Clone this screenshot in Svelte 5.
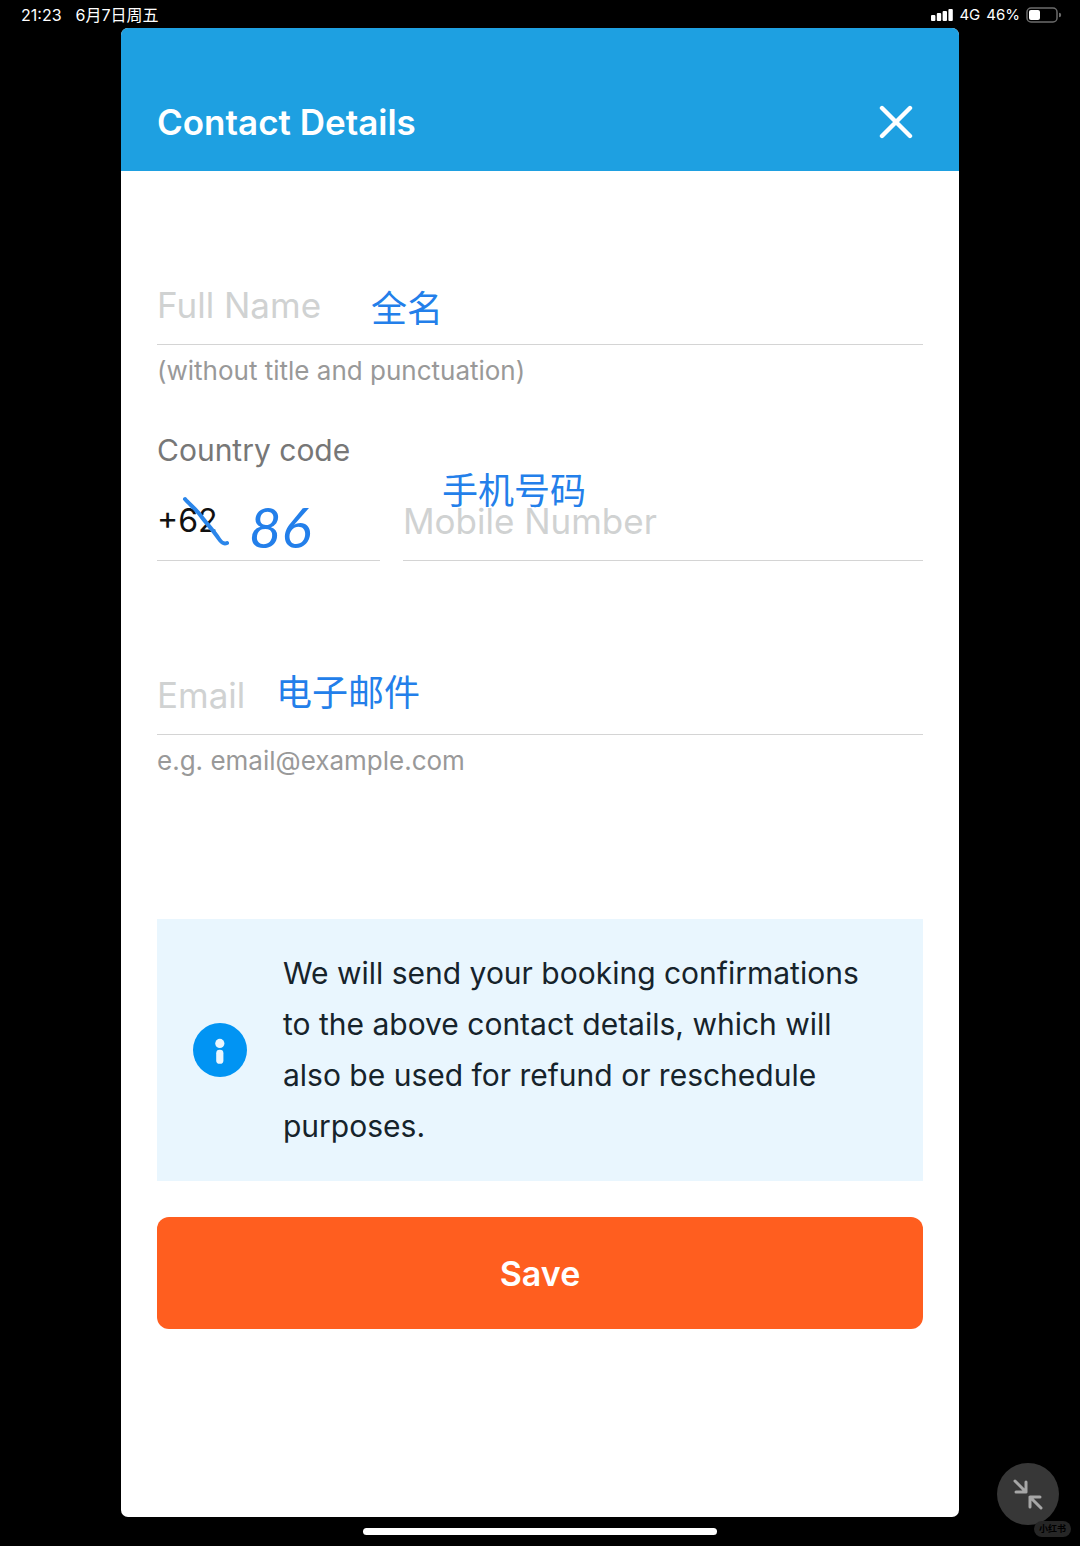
<script lang="ts">
  let name = $state("");
  let code = $state("+62");
  let mobile = $state("");
  let email = $state("");

  // signal bar heights, left to right
  const bars = [6, 8, 10, 12];
</script>

<div class="screen">
  <div class="status">
    <span class="clock">21:23</span>
    <span class="date">6月7日周五</span>
    <span class="right">
      <svg class="signal" viewBox="0 0 22 12" width="22" height="12" fill="#fff">
        {#each bars as h, i}
          <rect x={i * 5.8} y={12 - h} width="4.4" height={h} rx="1" />
        {/each}
      </svg>
      <span>4G</span>
      <span>46%</span>
      <svg viewBox="0 0 36 16" width="36" height="16">
        <rect x="1" y="1" width="30" height="14" rx="4" fill="none" stroke="#6c6c6c" stroke-width="1.5" />
        <rect x="3" y="3" width="11" height="10" rx="2" fill="#fff" />
        <path d="M33 5.8a2.2 2.2 0 0 1 0 4.4z" fill="#6c6c6c" />
      </svg>
    </span>
  </div>

  <main class="panel">
    <header>
      <h1>Contact Details</h1>
      <button class="close" type="button" aria-label="Close">
        <svg viewBox="0 0 34 34" width="34" height="34" fill="none" stroke="#fff" stroke-width="4.4" stroke-linecap="round">
          <path d="M3 3l28 28M31 3L3 31" />
        </svg>
      </button>
    </header>

    <form onsubmit={(e) => e.preventDefault()}>
      <div class="field">
        <input type="text" placeholder="Full Name" aria-label="Full Name" bind:value={name} />
        <span class="note note-name">全名</span>
      </div>
      <p class="hint">(without title and punctuation)</p>

      <label class="label" for="code">Country code</label>
      <div class="phone">
        <div class="field">
          <input id="code" class="code" type="text" bind:value={code} />
          <svg class="strike" viewBox="0 0 50 52" width="50" height="52">
            <path d="M4 4C8 9 15 14 20 21S32 35 38 44Q42 50 46 48" />
          </svg>
          <span class="note hand">86</span>
        </div>
        <div class="field">
          <input type="tel" placeholder="Mobile Number" aria-label="Mobile Number" bind:value={mobile} />
          <span class="note note-mobile">手机号码</span>
        </div>
      </div>

      <div class="field email">
        <input type="email" placeholder="Email" aria-label="Email" bind:value={email} />
        <span class="note note-email">电子邮件</span>
      </div>
      <p class="hint">e.g. email@example.com</p>

      <div class="info">
        <svg viewBox="0 0 54 54" width="54" height="54">
          <circle cx="27" cy="27" r="27" fill="#0194f3" />
          <circle cx="26.8" cy="20.4" r="4.6" fill="#eaf6fe" />
          <rect x="23.2" y="26.8" width="7.2" height="14" rx="3.4" fill="#eaf6fe" />
        </svg>
        <p>
          We will send your booking confirmations to the above contact details,
          which will also be used for refund or reschedule purposes.
        </p>
      </div>

      <button class="save" type="submit">Save</button>
    </form>
  </main>

  <div class="home"><span></span></div>

  <button class="shrink" type="button" aria-label="Exit full screen">
    <svg viewBox="0 0 32 32" width="32" height="32" fill="none" stroke="#a6a6a6" stroke-width="3" stroke-linecap="round" stroke-linejoin="round">
      <path d="M3 3L14 14M14 4V14H4" />
      <path d="M29 30L18 19M18 29V19H28" />
    </svg>
  </button>
  <span class="mark">小红书</span>
</div>

<style>
  :global(body) {
    background: #000;
  }
  .screen {
    position: relative;
    display: flex;
    flex-direction: column;
    box-sizing: border-box;
    min-height: 100vh;
    font-family: Inter, "Noto Sans CJK SC", sans-serif;
    background: #000;
  }

  .status {
    display: flex;
    align-items: center;
    height: 28px;
    padding: 2px 18px 0 21px;
    box-sizing: border-box;
    gap: 14px;
    color: #fff;
    font-size: 16px;
    line-height: 20px;
  }
  .right {
    display: flex;
    align-items: center;
    gap: 6px;
    margin-left: auto;
    font-size: 15px;
  }

  .panel {
    flex: 1;
    display: flex;
    flex-direction: column;
    margin: 0 121px;
    border-radius: 7px;
    overflow: hidden;
    background: #fff;
  }
  header {
    display: flex;
    align-items: center;
    justify-content: space-between;
    height: 143px;
    padding: 44px 46px 0 36px;
    box-sizing: border-box;
    background: #1ea0e1;
  }
  h1 {
    margin: 0;
    color: #fff;
    font-size: 35px;
    font-weight: 600;
  }
  .close {
    display: grid;
    padding: 0;
    border: none;
    background: none;
    cursor: pointer;
  }

  form {
    display: flex;
    flex-direction: column;
    padding: 94px 36px 36px;
  }
  .field {
    position: relative;
  }
  input {
    display: block;
    width: 100%;
    height: 80px;
    padding: 0;
    box-sizing: border-box;
    border: none;
    border-bottom: 1px solid #d4d4d4;
    border-radius: 0;
    outline: none;
    background: none;
    color: #111;
    font: 35px Inter, sans-serif;
  }
  input::placeholder {
    color: #d0d2d2;
    opacity: 1;
  }
  .code {
    font-size: 32px;
  }
  .hint {
    margin: 10px 0 0;
    color: #999;
    font-size: 26px;
    line-height: 32px;
  }
  .label {
    margin-top: 43px;
    color: #777;
    font-size: 30px;
    line-height: 40px;
  }
  .phone {
    display: grid;
    grid-template-columns: 3fr 7fr;
    gap: 23px;
    margin-top: 11px;
  }
  .email {
    margin-top: 94px;
  }

  /* annotations lying over the form */
  .note {
    position: absolute;
    color: #237fea;
    font-size: 36px;
    line-height: 40px;
    white-space: nowrap;
    pointer-events: none;
  }
  .note-name {
    left: 214px;
    top: 24px;
  }
  .note-mobile {
    left: 39px;
    top: -10px;
  }
  .note-email {
    left: 119px;
    top: 18px;
  }
  .hand {
    left: 92px;
    top: 26px;
    font-family: Lato, sans-serif;
    font-size: 56px;
    font-style: italic;
  }
  .strike {
    position: absolute;
    left: 24px;
    top: 14px;
    fill: none;
    stroke: #2b86ea;
    stroke-width: 4;
    stroke-linecap: round;
    pointer-events: none;
  }

  .info {
    display: flex;
    align-items: center;
    gap: 36px;
    margin-top: 142px;
    padding: 29px 36px;
    background: #e9f6fe;
  }
  .info svg {
    flex: none;
  }
  .info p {
    margin: 0;
    color: #16232b;
    font-size: 30px;
    line-height: 51px;
  }
  .save {
    height: 112px;
    margin-top: 36px;
    border: none;
    border-radius: 12px;
    background: #ff5e1f;
    color: #fff;
    font: 600 34px Inter, sans-serif;
    cursor: pointer;
  }

  .home {
    display: flex;
    justify-content: center;
    align-items: center;
    height: 29px;
  }
  .home span {
    width: 354px;
    height: 7px;
    border-radius: 4px;
    background: #fff;
  }
  .shrink {
    position: absolute;
    right: 21px;
    bottom: 21px;
    display: grid;
    place-items: center;
    width: 62px;
    height: 62px;
    padding: 0;
    border: none;
    border-radius: 50%;
    background: #373737;
    cursor: pointer;
  }
  .mark {
    position: absolute;
    right: 9px;
    bottom: 9px;
    padding: 0 5px;
    border-radius: 8px;
    background: #262626;
    color: #000;
    font-size: 9px;
    font-weight: 700;
    line-height: 16px;
  }
</style>
